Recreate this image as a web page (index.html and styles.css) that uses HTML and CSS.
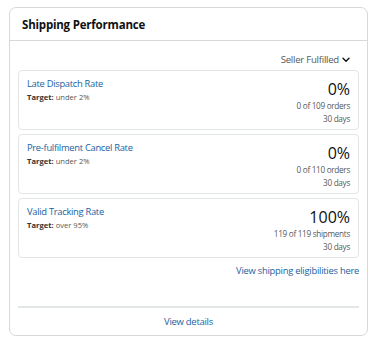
FILE: index.html
```html
<!DOCTYPE html>
<html lang="en">

<head>
    <meta charset="UTF-8">
    <meta name="viewport" content="width=device-width, initial-scale=1.0">
    <title>Shipping Performance</title>
    <link rel="stylesheet" href="styles.css">
</head>

<body>
    <div class="panel">
        <div class="panel-head">
            <h2>Shipping Performance</h2>
        </div>

        <div class="panel-body">
            <div class="filter">
                <span>Seller Fulfilled</span>
                <svg width="8" height="6" viewBox="0 0 8 6"><path d="M1 1.2 L4 4.2 L7 1.2" fill="none" stroke="#111" stroke-width="1.4" stroke-linecap="round" stroke-linejoin="round"/></svg>
            </div>

            <div class="metric">
                <div class="metric-info">
                    <a href="#" class="metric-name">Late Dispatch Rate</a>
                    <div class="target"><b>Target:</b> under 2%</div>
                </div>
                <div class="metric-value">
                    <div class="rate">0%</div>
                    <div class="count">0 of 109 orders</div>
                    <div class="count">30 days</div>
                </div>
            </div>

            <div class="metric">
                <div class="metric-info">
                    <a href="#" class="metric-name">Pre-fulfilment Cancel Rate</a>
                    <div class="target"><b>Target:</b> under 2%</div>
                </div>
                <div class="metric-value">
                    <div class="rate">0%</div>
                    <div class="count">0 of 110 orders</div>
                    <div class="count">30 days</div>
                </div>
            </div>

            <div class="metric">
                <div class="metric-info">
                    <a href="#" class="metric-name">Valid Tracking Rate</a>
                    <div class="target"><b>Target:</b> over 95%</div>
                </div>
                <div class="metric-value">
                    <div class="rate">100%</div>
                    <div class="count">119 of 119 shipments</div>
                    <div class="count">30 days</div>
                </div>
            </div>

            <div class="more">
                <a href="#">View shipping eligibilities here</a>
            </div>
        </div>

        <div class="panel-foot">
            <a href="#">View details</a>
        </div>
    </div>
</body>

</html>
```

FILE: styles.css
```css
* {
    box-sizing: border-box;
}

body {
    margin: 0;
    padding: 7px 7px 0 9px;
    font-family: "Open Sans", Arial, sans-serif;
    color: #0f1111;
    background: white;
}

a {
    color: #2162a1;
    text-decoration: none;
}

.panel {
    border: 1px solid #d5d9d9;
    border-radius: 7px;
    height: 329px;
    display: flex;
    flex-direction: column;
}

.panel-head {
    height: 33px;
    display: flex;
    align-items: center;
    padding-left: 12px;
    border-bottom: 1px solid #d5d9d9;
}

.panel-head h2 {
    margin: 0;
    font-size: 11.5px;
    letter-spacing: -0.2px;
    font-weight: bold;
}

.panel-body {
    padding: 0 8px;
    flex: 1;
}

.filter {
    display: flex;
    justify-content: flex-end;
    align-items: center;
    gap: 3px;
    height: 29px;
    padding: 13px 9px 4px 0;
    font-size: 9.6px;
    letter-spacing: -0.25px;
    line-height: 12px;
    color: #565959;
}

.metric {
    display: flex;
    justify-content: space-between;
    height: 60px;
    padding: 0 8px;
    margin-bottom: 4px;
    border: 1px solid #e3e6e6;
    border-radius: 4px;
}

.metric-info {
    padding-top: 7px;
}

.metric-name {
    display: block;
    font-size: 9.4px;
    letter-spacing: -0.3px;
    line-height: 12px;
}

.target {
    margin-top: 1px;
    font-size: 7.6px;
    line-height: 12px;
    color: #565959;
}

.target b {
    color: #333;
}

.metric-value {
    text-align: right;
    padding-top: 8px;
}

.rate {
    font-size: 16px;
    line-height: 20px;
}

.count {
    font-size: 8.2px;
    letter-spacing: -0.3px;
    line-height: 13px;
    color: #565959;
}

.more {
    text-align: right;
    font-size: 9.4px;
    letter-spacing: -0.25px;
    line-height: 12px;
    padding-top: 3px;
}

.panel-foot {
    margin: 0 8px;
    border-top: 2px solid #e3e6e6;
    height: 29px;
    padding-bottom: 1px;
    display: flex;
    align-items: center;
    justify-content: center;
    font-size: 9.5px;
    letter-spacing: -0.3px;
}
```
